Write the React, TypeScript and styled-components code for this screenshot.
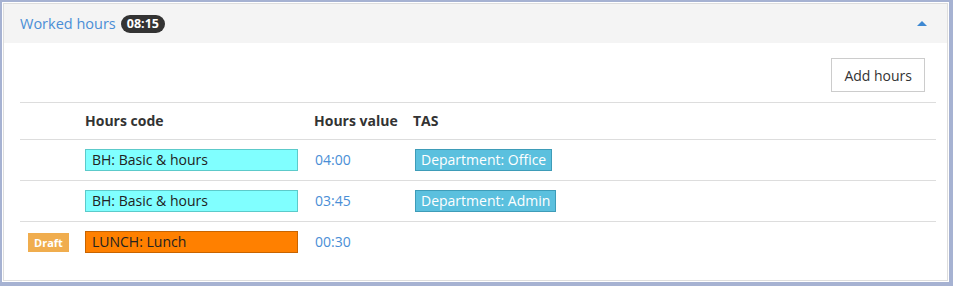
import styled, { createGlobalStyle } from 'styled-components'

const GlobalStyle = createGlobalStyle`
  html, body {
    margin: 0;
    padding: 0;
    background: #a6b2d2;
  }
  body {
    font-family: "Open Sans", "Liberation Sans", sans-serif;
    font-size: 14px;
    color: #333;
  }
`

const colors = {
  link: '#4a8ed6',
  border: '#dddddd',
  headerBg: '#f4f4f4',
  cyan: '#80ffff',
  orange: '#ff8000',
  info: '#5bc0de',
  warning: '#f0ad4e',
}

const Frame = styled.div`
  box-sizing: border-box;
  height: 286px;
  padding: 2px 4px 4px 2px;
  display: flex;
`

const Sheet = styled.div`
  flex: 1;
  background: #fff;
  padding: 1px;
  display: flex;
`

const Panel = styled.section`
  flex: 1;
  border: 1px solid ${colors.border};
  background: #fff;
  display: flex;
  flex-direction: column;
`

const PanelHeader = styled.header`
  flex-shrink: 0;
  height: 39px;
  background: ${colors.headerBg};
  display: flex;
  align-items: center;
  padding: 0 20px 0 16px;
`

const Title = styled.span`
  color: ${colors.link};
  font-size: 14.5px;
`

const Badge = styled.span`
  margin-left: 5px;
  background: #333;
  color: #fff;
  font-weight: 700;
  font-size: 12.5px;
  line-height: 14px;
  padding: 2px 6px;
  border-radius: 10px;
`

const Caret = styled.span`
  margin-left: auto;
  width: 0;
  height: 0;
  border-left: 5px solid transparent;
  border-right: 5px solid transparent;
  border-bottom: 5px solid #3d88d2;
`

const PanelBody = styled.div`
  padding: 15px 11px 0 16px;
  display: flex;
  flex-direction: column;
`

const Toolbar = styled.div`
  display: flex;
  justify-content: flex-end;
  padding-right: 11px;
  margin-bottom: 10px;
`

const Button = styled.button`
  font-family: inherit;
  font-size: 14px;
  color: #333;
  background: #fff;
  border: 1px solid #ccc;
  border-radius: 0;
  height: 34px;
  padding: 0 12px;
`

const Table = styled.div`
  display: grid;
  grid-template-columns: 57px 229px 99px 1fr;
`

const Cell = styled.div<{ $head?: boolean }>`
  border-top: 1px solid ${colors.border};
  padding: ${(p) => (p.$head ? '8px 8px' : '9px 8px')};
  line-height: 20px;
  white-space: nowrap;
  font-weight: ${(p) => (p.$head ? 700 : 400)};
  display: flex;
  align-items: center;
`

const CodeBox = styled.div<{ $bg: string; $edge: string }>`
  flex: 1;
  box-sizing: border-box;
  height: 22px;
  line-height: 20px;
  padding: 0 6px;
  background: ${(p) => p.$bg};
  border: 1px solid ${(p) => p.$edge};
  color: #222;
`

const Value = styled.span`
  color: ${colors.link};
  padding-left: 1px;
`

const Tag = styled.span`
  margin-left: 2px;
  background: ${colors.info};
  border: 1px solid #3e9cb8;
  color: #fff;
  line-height: 20px;
  padding: 0 5px;
`

const Draft = styled.span`
  background: ${colors.warning};
  color: #fff;
  font-weight: 700;
  font-size: 11px;
  line-height: 19px;
  padding: 0 6px;
`

const rows = [
  { draft: false, code: 'BH: Basic & hours', bg: colors.cyan, edge: '#5ccaca', value: '04:00', tas: 'Department: Office' },
  { draft: false, code: 'BH: Basic & hours', bg: colors.cyan, edge: '#5ccaca', value: '03:45', tas: 'Department: Admin' },
  { draft: true, code: 'LUNCH: Lunch', bg: colors.orange, edge: '#c86400', value: '00:30', tas: '' },
]

export default function App() {
  return (
    <>
      <GlobalStyle />
      <Frame>
        <Sheet>
          <Panel>
            <PanelHeader>
              <Title>Worked hours</Title>
              <Badge>08:15</Badge>
              <Caret />
            </PanelHeader>
            <PanelBody>
              <Toolbar>
                <Button>Add hours</Button>
              </Toolbar>
              <Table>
                <Cell $head />
                <Cell $head>Hours code</Cell>
                <Cell $head>Hours value</Cell>
                <Cell $head>TAS</Cell>
                {rows.map((r, i) => (
                  <>
                    <Cell key={`d${i}`}>{r.draft && <Draft>Draft</Draft>}</Cell>
                    <Cell key={`c${i}`}>
                      <CodeBox $bg={r.bg} $edge={r.edge}>{r.code}</CodeBox>
                    </Cell>
                    <Cell key={`v${i}`}>
                      <Value>{r.value}</Value>
                    </Cell>
                    <Cell key={`t${i}`}>{r.tas && <Tag>{r.tas}</Tag>}</Cell>
                  </>
                ))}
              </Table>
            </PanelBody>
          </Panel>
        </Sheet>
      </Frame>
    </>
  )
}
